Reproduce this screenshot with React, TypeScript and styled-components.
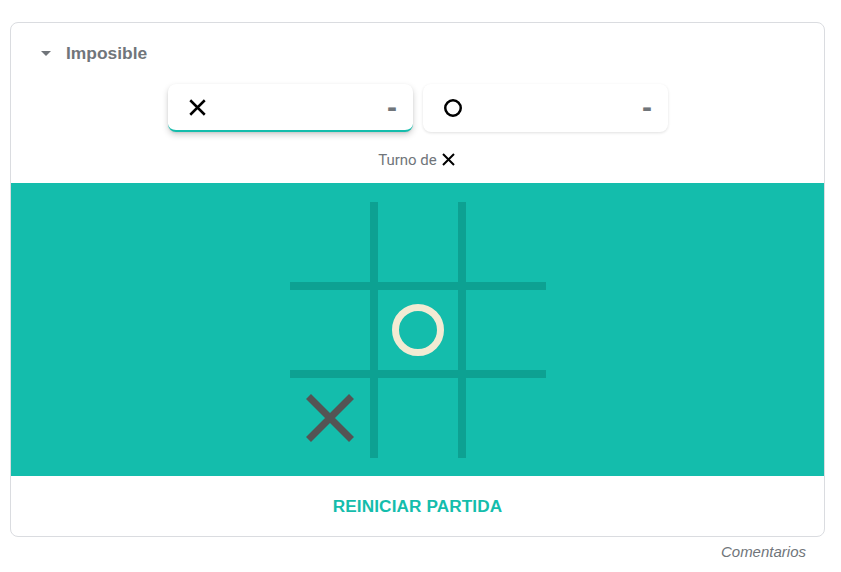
import React from "react";
import { createGlobalStyle, styled } from "styled-components";

const GlobalStyle = createGlobalStyle`
  html, body {
    margin: 0;
    padding: 0;
    background: #fff;
    font-family: Roboto, Arial, sans-serif;
  }
`;

const Page = styled.div`
  padding: 22px 16px 0 10px;
  width: 841px;
  box-sizing: border-box;
`;

const Card = styled.div`
  border: 1px solid #dadce0;
  border-radius: 8px;
  overflow: hidden;
  background: #fff;
`;

const Header = styled.div`
  display: flex;
  align-items: center;
  gap: 15px;
  height: 61px;
  padding: 0 0 1px 30px;
  box-sizing: border-box;
  font-family: "Liberation Sans", Arial, sans-serif;
  font-weight: bold;
  font-size: 17.4px;
  color: #70757a;
`;

const Caret = styled.span`
  width: 0;
  height: 0;
  border-left: 5px solid transparent;
  border-right: 5px solid transparent;
  border-top: 5px solid #70757a;
  margin-top: 1px;
`;

const Scores = styled.div`
  display: flex;
  justify-content: center;
  gap: 10px;
  padding-left: 1px;
`;

const ScoreCard = styled.div<{ $active?: boolean }>`
  width: 245px;
  height: 48px;
  box-sizing: border-box;
  display: flex;
  align-items: center;
  justify-content: space-between;
  padding: 1px 16px 0 21px;
  border-radius: 8px;
  background: #fff;
  border-bottom: 2px solid ${(p) => (p.$active ? "#14bdac" : "transparent")};
  box-shadow: ${(p) =>
    p.$active
      ? "0 3px 6px rgba(0,0,0,0.18), 0 1px 2px rgba(0,0,0,0.08)"
      : "0 1px 3px rgba(0,0,0,0.12)"};
`;

const Dash = styled.span`
  font-family: "Liberation Sans", Arial, sans-serif;
  font-weight: bold;
  font-size: 30px;
  color: #70757a;
  line-height: 1;
  margin-top: -2px;
`;

const Turn = styled.div`
  display: flex;
  justify-content: center;
  align-items: center;
  gap: 5px;
  height: 51px;
  padding: 4px 2px 0 0;
  box-sizing: border-box;
  font-size: 15px;
  color: #70757a;
`;

const Field = styled.div`
  background: #14bdac;
  height: 293px;
  display: flex;
  justify-content: center;
  align-items: center;
`;

const Board = styled.div`
  display: grid;
  grid-template-columns: repeat(3, 80px);
  grid-template-rows: repeat(3, 80px);
  gap: 8px;
  width: 256px;
  height: 256px;
  background: #0da192;
  margin-left: 1px;
  margin-top: 1px;
`;

const Cell = styled.div`
  background: #14bdac;
  display: flex;
  align-items: center;
  justify-content: center;
`;

const Footer = styled.div`
  height: 60px;
  display: flex;
  align-items: center;
  justify-content: center;
  font-family: "Liberation Sans", Arial, sans-serif;
  font-weight: bold;
  font-size: 17.2px;
  color: #14bdac;
  letter-spacing: 0.1px;
`;

const Comments = styled.div`
  text-align: right;
  padding: 6px 19px 0 0;
  font-family: "Liberation Sans", Arial, sans-serif;
  font-style: italic;
  font-size: 15px;
  color: #70757a;
`;

const Cross = ({ size, stroke, color }: { size: number; stroke: number; color: string }) => (
  <svg width={size} height={size} viewBox={`0 0 ${size} ${size}`}>
    <path
      d={`M${stroke / 2} ${stroke / 2} L${size - stroke / 2} ${size - stroke / 2} M${size - stroke / 2} ${stroke / 2} L${stroke / 2} ${size - stroke / 2}`}
      stroke={color}
      strokeWidth={stroke}
    />
  </svg>
);

const Ring = ({ size, stroke, color }: { size: number; stroke: number; color: string }) => (
  <svg width={size} height={size} viewBox={`0 0 ${size} ${size}`}>
    <circle cx={size / 2} cy={size / 2} r={(size - stroke) / 2} fill="none" stroke={color} strokeWidth={stroke} />
  </svg>
);

const cells: (null | "x" | "o")[] = [null, null, null, null, "o", null, "x", null, null];

export default function App() {
  return (
    <>
      <GlobalStyle />
      <Page>
        <Card>
          <Header>
            <Caret />
            Imposible
          </Header>
          <Scores>
            <ScoreCard $active>
              <Cross size={17} stroke={2.5} color="#000" />
              <Dash>-</Dash>
            </ScoreCard>
            <ScoreCard>
              <Ring size={18} stroke={2.5} color="#000" />
              <Dash>-</Dash>
            </ScoreCard>
          </Scores>
          <Turn>
            Turno de
            <Cross size={13} stroke={2} color="#000" />
          </Turn>
          <Field>
            <Board>
              {cells.map((c, i) => (
                <Cell key={i}>
                  {c === "x" && <Cross size={50} stroke={7} color="#545454" />}
                  {c === "o" && <Ring size={52} stroke={7} color="#f2ebd3" />}
                </Cell>
              ))}
            </Board>
          </Field>
          <Footer>REINICIAR PARTIDA</Footer>
        </Card>
        <Comments>Comentarios</Comments>
      </Page>
    </>
  );
}
